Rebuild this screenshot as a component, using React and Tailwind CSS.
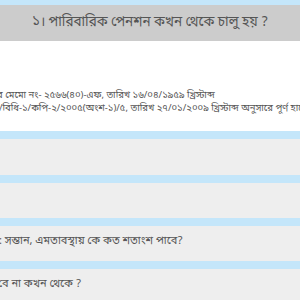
const bn = "font-['Noto_Sans_Bengali','Lohit_Bengali','FreeSans','Noto_Sans',sans-serif]";

const Band = () => <div className="h-[8px] bg-[#c4e6fa]" />;

const Panel = ({ children, h = 'h-[36px]' }) => (
  <div className={`${h} bg-[#eeeeee] flex items-start pt-[8px] text-[11px] leading-[14px] text-[#555555] whitespace-nowrap`}>
    {children}
  </div>
);

export default function App() {
  return (
    <div className={`w-[300px] h-[300px] overflow-hidden bg-white ${bn}`}>
      <div className="h-[5px] bg-[#c4e6fa]" />
      <div className="h-[36px] bg-[#cccccc] flex items-center justify-center text-[13.5px] text-[#555555] whitespace-nowrap">
        ১। পারিবারিক পেনশন কখন থেকে চালু হয় ?
      </div>

      {/* answer body */}
      <div className="h-[90px] pt-[49px] text-[9.5px] leading-[12.5px] text-[#555555] whitespace-nowrap">
        <p className="-ml-[3px]">র মেমো নং- ২৫৬৬(৪০)-এফ, তারিখ ১৬/০৪/১৯৫৯ খ্রিস্টাব্দ</p>
        <p className="-ml-[1px]">/বিধি-১/কপি-২/২০০৫(অংশ-১)/৫, তারিখ ২৭/০১/২০০৯ খ্রিস্টাব্দ অনুসারে পূর্ণ হারে আজীবন পারিবারিক (পেনশন)</p>
      </div>

      <Band />
      <Panel />
      <Band />
      <Panel h="h-[35px]" />
      <Band />
      <Panel h="h-[35px]">
        <span className="-ml-[1px]">: সন্তান, এমতাবস্থায় কে কত শতাংশ পাবে?</span>
      </Panel>
      <Band />
      <Panel>
        <span className="-ml-[2px]">বে না কখন থেকে ?</span>
      </Panel>
    </div>
  );
}
